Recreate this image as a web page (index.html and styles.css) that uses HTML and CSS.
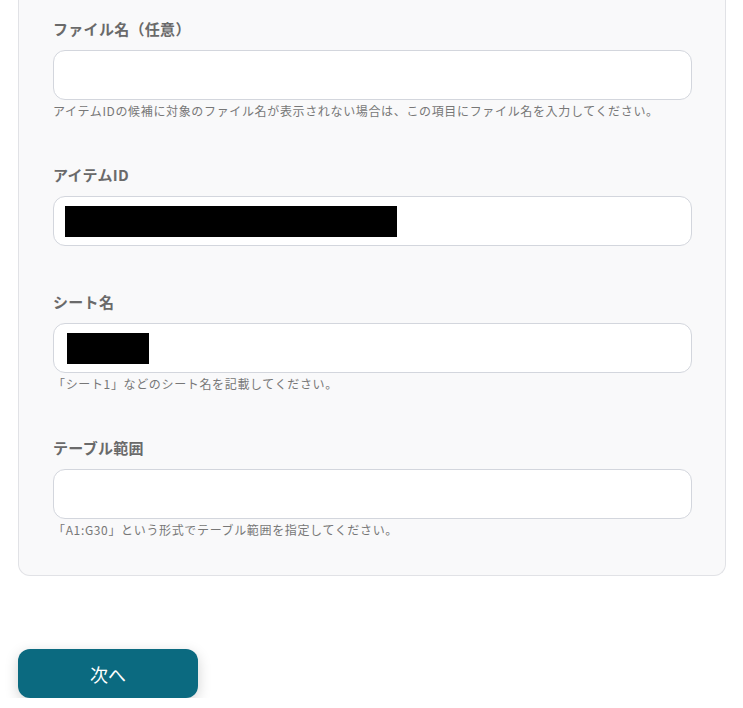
FILE: index.html
```html
<!DOCTYPE html>
<html lang="ja">
<head>
<meta charset="utf-8">
<title>フォーム</title>
<link rel="stylesheet" href="styles.css">
</head>
<body>
<div class="card">
  <div class="field">
    <label class="label">ファイル名（任意）</label>
    <div class="input"></div>
    <p class="help">アイテムIDの候補に対象のファイル名が表示されない場合は、この項目にファイル名を入力してください。</p>
  </div>
  <div class="field">
    <label class="label">アイテムID</label>
    <div class="input"><span class="redact redact-id"></span></div>
  </div>
  <div class="field">
    <label class="label">シート名</label>
    <div class="input"><span class="redact redact-sheet"></span></div>
    <p class="help">「シート1」などのシート名を記載してください。</p>
  </div>
  <div class="field">
    <label class="label">テーブル範囲</label>
    <div class="input"></div>
    <p class="help">「A1:G30」という形式でテーブル範囲を指定してください。</p>
  </div>
</div>
<div class="actions">
  <button class="next">次へ</button>
</div>
</body>
</html>
```

FILE: styles.css
```css
html, body {
  margin: 0;
  padding: 0;
  background: #ffffff;
  font-family: "Noto Sans CJK JP", "Noto Sans", sans-serif;
}

.card {
  box-sizing: border-box;
  width: 708px;
  margin-left: 18px;
  padding: 19px 33px 37px 34px;
  background: #f9f9fa;
  border: 1px solid #e1e2e6;
  border-top: none;
  border-radius: 0 0 12px 12px;
}

.field {
  display: flex;
  flex-direction: column;
}

.field + .field {
  margin-top: 46px;
}

.label {
  display: block;
  font-size: 15px;
  line-height: 20px;
  font-weight: 700;
  color: #6a6a6a;
  letter-spacing: 0.3px;
  margin-bottom: 11px;
}

.input {
  box-sizing: border-box;
  height: 50px;
  width: 639px;
  background: #ffffff;
  border: 1px solid #d3d6dd;
  border-radius: 12px;
  display: flex;
  align-items: center;
}

.redact {
  display: block;
  background: #000000;
}

.redact-id {
  width: 332px;
  height: 31px;
  margin-left: 11px;
}

.redact-sheet {
  width: 82px;
  height: 31px;
  margin-left: 13px;
}

.help {
  margin: 2px 0 0 0;
  font-size: 12px;
  line-height: 17px;
  letter-spacing: 0.65px;
  color: #777777;
}

.actions {
  padding: 73px 0 0 18px;
}

.next {
  display: block;
  width: 180px;
  height: 49px;
  border: none;
  border-radius: 12px;
  background: #0b6a80;
  color: #ffffff;
  font-family: "Noto Sans CJK JP", "Noto Sans", sans-serif;
  font-size: 18px;
  box-shadow: 0 4px 14px rgba(0, 0, 0, 0.18);
}
```
